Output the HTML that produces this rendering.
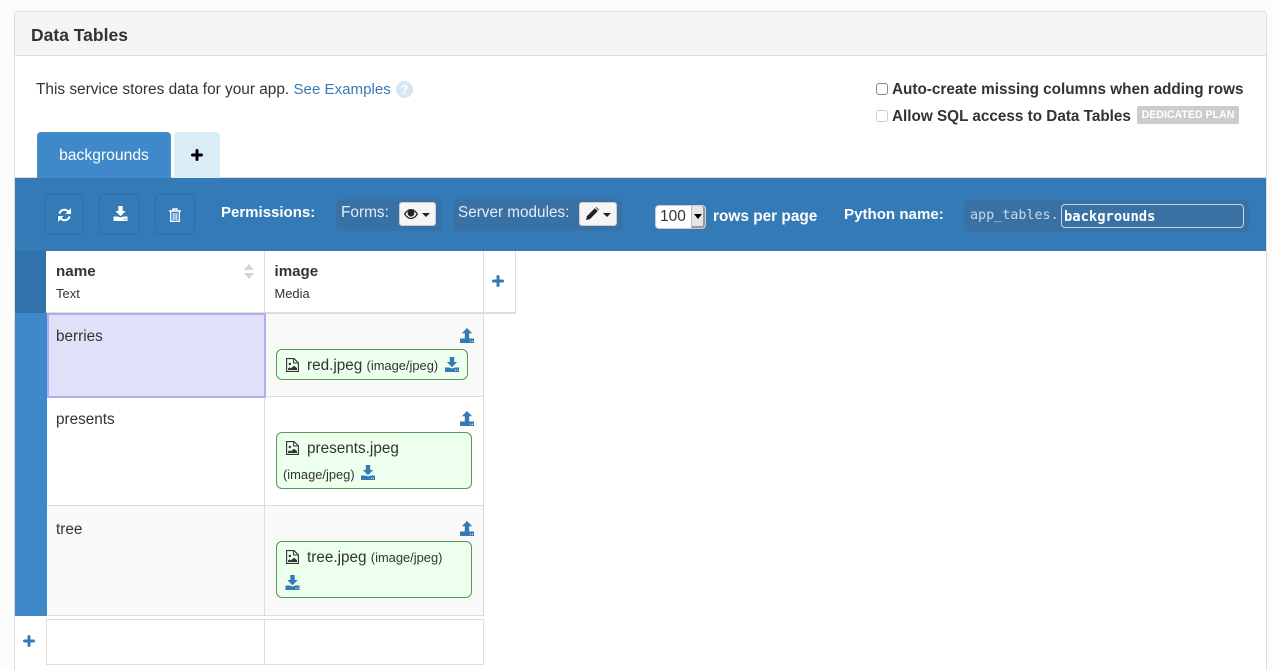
<!DOCTYPE html>
<html><head><meta charset="utf-8"><style>
html,body{margin:0;padding:0;background:#fcfcfc;width:1273px;height:670px;overflow:hidden}
body{font-family:"Liberation Sans",Arial,sans-serif;color:#333;font-size:15.4px;position:relative}
.a{position:absolute;box-sizing:border-box}
.t{position:absolute;white-space:nowrap;line-height:18px}
.b{font-weight:bold}
.w{color:#fff}
.btn{position:absolute;top:194px;height:41px;box-sizing:border-box;border:1px solid #2e6da4;border-radius:5px;background:#337ab7}
.grp{position:absolute;background:#3a71a5;border-radius:5px}
.dd{position:absolute;background:#f5f5f5;border:1px solid #ccc;border-radius:3px;box-sizing:border-box}
.chip{position:absolute;left:276px;box-sizing:border-box;background:#edffed;border:1px solid #5a955a;border-radius:6px}
.ln{position:absolute;background:#ddd}
.sm{font-size:12.9px}
svg{position:absolute;overflow:visible}
</style></head><body>
<svg width="0" height="0" style="left:0;top:0"><defs>
<symbol id="up" viewBox="0 0 14 15"><path d="M7 0L12.200 5.200H9.200V10.500H4.800V5.200H1.800Z"/><path fill-rule="evenodd" d="M0 10.500H14V15H0ZM10 12.700h1v1h-1zM12 12.700h1v1h-1z"/></symbol>
<symbol id="dn" viewBox="0 0 14 15"><path d="M4.800 0H9.200V5H12.200L7 10.200L1.800 5H4.800Z"/><path fill-rule="evenodd" d="M0 10.500H4L7 11.500 10 10.500H14V15H0ZM10 12.700h1v1h-1zM12 12.700h1v1h-1z"/></symbol>
<symbol id="file" viewBox="0 0 13 14"><path fill="none" stroke="#333" stroke-width="1.100" d="M.6.6H8L12.400 4.800V13.400H.6Z"/><path fill="none" stroke="#333" stroke-width="1" d="M7.600.8V5H12"/><circle cx="3.800" cy="6" r="1.200" fill="#333"/><path fill="#333" d="M2 12V10.600L3.600 9.200 5 10.400 8 7.600 11 10.200V12Z"/></symbol>
</defs></svg>

<div class="a" style="left:14px;top:11px;width:1253px;height:670px;background:#fff;border:1px solid #ddd;border-radius:4px"></div>
<div class="a" style="left:15px;top:12px;width:1251px;height:44px;background:#f5f5f5;border-bottom:1px solid #ddd;border-radius:3px 3px 0 0"></div>
<div class="t b" style="left:31px;top:26px;font-size:17.500px;color:#333">Data Tables</div>

<div class="t" style="left:36px;top:81px;font-size:15.400px">This service stores data for your app. <span style="color:#337ab7;font-size:15.100px">See Examples</span></div>
<div class="a" style="left:396px;top:81px;width:17px;height:17px;border-radius:50%;background:#d9e6f2"></div>
<div class="t b" style="left:396px;top:81px;width:17px;text-align:center;color:#fff;font-size:13px;line-height:17px">?</div>

<div class="a" style="left:876px;top:83px;width:12px;height:12px;border:1px solid #888;border-radius:3px;background:#fff"></div>
<div class="t b" style="left:892px;top:81px;font-size:15.290px">Auto-create missing columns when adding rows</div>
<div class="a" style="left:876px;top:110px;width:12px;height:12px;border:1px solid #ccc;border-radius:3px;background:#fff"></div>
<div class="t b" style="left:892px;top:108px;font-size:15.290px">Allow SQL access to Data Tables</div>
<div class="a" style="left:1137px;top:106px;width:102px;height:18px;background:#ccc;border-radius:2px"></div>
<div class="t b" style="left:1137px;top:106px;width:102px;text-align:center;color:#fff;font-size:10.600px;line-height:18px">DEDICATED PLAN</div>

<div class="a" style="left:15px;top:177px;width:1251px;height:1px;background:#ddd"></div>
<div class="a" style="left:37px;top:132px;width:134px;height:46px;background:#3f89ca;border:1px solid #4a90d0;border-bottom:0;border-radius:4px 4px 0 0"></div>
<div class="t w" style="left:37px;top:147px;width:134px;text-align:center;font-size:15.700px">backgrounds</div>
<div class="a" style="left:174px;top:132px;width:46px;height:46px;background:#d9edf7;border-radius:4px 4px 0 0"></div>
<svg style="left:191px;top:149px" width="12" height="12" stroke="#000" stroke-width="3" stroke-linecap="round"><path d="M6 1.500V10.500M1.500 6H10.500"/></svg>

<div class="a" style="left:15px;top:178px;width:1251px;height:73px;background:#337ab7"></div>

<div class="btn" style="left:44px;width:40px"></div>
<div class="btn" style="left:99px;width:41px"></div>
<div class="btn" style="left:155px;width:40px"></div>
<svg style="left:58px;top:208px" width="13" height="14" viewBox="0 0 13 14" fill="none" stroke="#fff" stroke-width="2"><path d="M1.400 5.600A5.200 5.200 0 0 1 10.400 3.600"/><path d="M11.600 8.400A5.200 5.200 0 0 1 2.600 10.400"/><path fill="#fff" stroke="none" d="M13 0V6H7.400ZM0 14V8H5.600Z"/></svg>
<svg style="left:113px;top:206px" width="15" height="15" fill="#fff"><use href="#dn"/></svg>
<svg style="left:169px;top:208px" width="12" height="14" viewBox="0 0 12 14" fill="none" stroke="#fff"><path stroke-width="1.400" d="M0 3H12M4 3V1H8V3"/><path stroke-width="1.300" d="M1.700 3V13.300H10.300V3"/><path stroke-width="1" d="M4.200 5V12M6 5V12M7.800 5V12"/></svg>

<div class="t b w" style="left:221px;top:204px;font-size:15px">Permissions:</div>
<div class="grp" style="left:336px;top:199px;width:106px;height:32px"></div>
<div class="t" style="left:341px;top:204px;font-size:15.400px;color:#e4edf5">Forms:</div>
<div class="dd" style="left:399px;top:202px;width:37px;height:24px"></div>
<svg style="left:404px;top:209px" width="14" height="10" viewBox="0 0 14 10"><path fill="#222" fill-rule="evenodd" d="M0 5C2 1.500 4.500 0 7 0S12 1.500 14 5C12 8.500 9.500 10 7 10S2 8.500 0 5ZM1.500 5C3 7.500 5 8.800 7 8.800S11 7.500 12.500 5C11.500 3.500 10.500 2.500 9.600 2A3.400 3.400 0 1 1 4.400 2C3.500 2.500 2.500 3.500 1.500 5Z"/><circle cx="7" cy="4.600" r="2" fill="#222"/></svg>
<svg style="left:422px;top:213px" width="8" height="4" fill="#222"><path d="M0 0H8L4 4Z"/></svg>

<div class="grp" style="left:453px;top:199px;width:169px;height:32px"></div>
<div class="t" style="left:458px;top:204px;font-size:15.300px;color:#e4edf5">Server modules:</div>
<div class="dd" style="left:579px;top:202px;width:38px;height:24px"></div>
<svg style="left:586px;top:207px" width="13" height="13" viewBox="0 0 14 14" fill="#222"><path d="M0 14L1 9.800 9.500 1.300 12.700 4.500 4.200 13ZM10.300.5L11 0 14 3 13.500 3.700Z"/></svg>
<svg style="left:603px;top:213px" width="8" height="4" fill="#222"><path d="M0 0H8L4 4Z"/></svg>

<div class="a" style="left:655px;top:205px;width:51px;height:24px;background:#fff;border:1px solid #ccc;border-radius:4px"></div>
<div class="a" style="left:691px;top:206px;width:14px;height:22px;background:#e6e6e6;border-left:1px solid #bbb;border-right:2px solid #999;border-bottom:2px solid #999;border-radius:0 3px 3px 0"></div>
<div class="t" style="left:660px;top:208px;font-size:15.500px;color:#333">100</div>
<svg style="left:694px;top:214px" width="8" height="5" fill="#000"><path d="M0 0H8L4 5Z"/></svg>
<div class="t b w" style="left:713px;top:208px;font-size:15.400px">rows per page</div>
<div class="t b w" style="left:844px;top:206px;font-size:15.100px">Python name:</div>
<div class="grp" style="left:964px;top:200px;width:285px;height:32px"></div>
<div class="t" style="left:970px;top:207px;font-family:'DejaVu Sans Mono','Liberation Mono',monospace;font-size:13.400px;color:#c9d8e6">app_tables.</div>
<div class="a" style="left:1061px;top:204px;width:183px;height:24px;border:1px solid #c5d6e6;border-radius:4px"></div>
<div class="t b w" style="left:1064px;top:208px;font-family:'DejaVu Sans Mono','Liberation Mono',monospace;font-size:13.800px">backgrounds</div>

<!-- table header -->
<div class="a" style="left:15px;top:251px;width:31px;height:62px;background:#3272aa"></div>
<div class="a" style="left:46px;top:251px;width:470px;height:62px;background:#fff"></div>
<div class="ln" style="left:264px;top:251px;width:1px;height:62px"></div>
<div class="ln" style="left:483px;top:251px;width:1px;height:62px"></div>
<div class="ln" style="left:515px;top:251px;width:1px;height:63px"></div>
<div class="ln" style="left:46px;top:312px;width:470px;height:2px"></div>
<div class="t b" style="left:56px;top:263px;font-size:15.200px">name</div>
<div class="t" style="left:56px;top:285px;font-size:13px">Text</div>
<svg style="left:244px;top:264px" width="10" height="15" fill="#d4d4d4"><path d="M5 0L10 6H0ZM0 9H10L5 15Z"/></svg>
<div class="t b" style="left:274.500px;top:263px;font-size:15.100px">image</div>
<div class="t" style="left:274.500px;top:285px;font-size:12.900px">Media</div>
<svg style="left:492px;top:275px" width="12" height="12" stroke="#337ab7" stroke-width="3" stroke-linecap="round"><path d="M6 1.500V10.500M1.500 6H10.500"/></svg>

<!-- rows -->
<div class="a" style="left:15px;top:313px;width:32px;height:303px;background:#3f89ca"></div>
<div class="a" style="left:47px;top:314px;width:437px;height:83px;background:#f9f9f9"></div>
<div class="a" style="left:47px;top:398px;width:437px;height:108px;background:#fff"></div>
<div class="a" style="left:47px;top:506px;width:437px;height:110px;background:#f9f9f9"></div>
<div class="ln" style="left:264px;top:313px;width:1px;height:303px"></div>
<div class="ln" style="left:483px;top:313px;width:1px;height:303px"></div>
<div class="ln" style="left:47px;top:396px;width:437px;height:1px"></div>
<div class="ln" style="left:47px;top:505px;width:437px;height:1px"></div>
<div class="ln" style="left:47px;top:615px;width:437px;height:1px"></div>
<div class="a" style="left:47px;top:313px;width:219px;height:85px;background:#e0e0f8;border:2px solid #aeaef2"></div>

<div class="t" style="left:56px;top:328px;font-size:15.300px">berries</div>
<div class="t" style="left:56px;top:411px;font-size:15.300px">presents</div>
<div class="t" style="left:56px;top:521px;font-size:15.300px">tree</div>

<svg style="left:460px;top:328px" width="14" height="15" fill="#337ab7"><use href="#up"/></svg>
<svg style="left:460px;top:411px" width="14" height="15" fill="#337ab7"><use href="#up"/></svg>
<svg style="left:460px;top:521px" width="14" height="15" fill="#337ab7"><use href="#up"/></svg>
<svg style="left:460px;top:634px" width="14" height="15" fill="#337ab7"><use href="#up"/></svg>

<div class="chip" style="top:349px;width:192px;height:31px"></div>
<svg style="left:286px;top:358px" width="13" height="14"><use href="#file"/></svg>
<div class="t" style="left:307px;top:357px;font-size:15.300px">red.jpeg <span class="sm">(image/jpeg)</span></div>
<svg style="left:445px;top:357px" width="14" height="15" fill="#337ab7"><use href="#dn"/></svg>

<div class="chip" style="top:432px;width:196px;height:57px"></div>
<svg style="left:286px;top:441px" width="13" height="14"><use href="#file"/></svg>
<div class="t" style="left:307px;top:440px;font-size:15.300px">presents.jpeg</div>
<div class="t sm" style="left:283px;top:466px">(image/jpeg)</div>
<svg style="left:361px;top:465px" width="14" height="15" fill="#337ab7"><use href="#dn"/></svg>

<div class="chip" style="top:541px;width:196px;height:57px"></div>
<svg style="left:286px;top:550px" width="13" height="14"><use href="#file"/></svg>
<div class="t" style="left:307px;top:549px;font-size:15.300px">tree.jpeg <span class="sm">(image/jpeg)</span></div>
<svg style="left:285px;top:575px" width="15" height="15" fill="#337ab7"><use href="#dn"/></svg>

<!-- new row -->
<div class="a" style="left:46px;top:619px;width:438px;height:46px;background:#fff;border:1px solid #ddd"></div>
<div class="ln" style="left:264px;top:619px;width:1px;height:46px"></div>
<svg style="left:23px;top:635px" width="12" height="12" stroke="#337ab7" stroke-width="3" stroke-linecap="round"><path d="M6 1.500V10.500M1.500 6H10.500"/></svg>
</body></html>
